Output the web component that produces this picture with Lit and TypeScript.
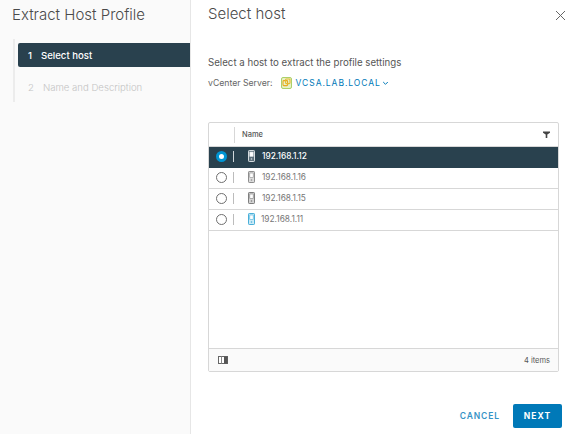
import { LitElement, html, css } from "lit";
import { customElement } from "lit/decorators.js";

const hostIcon = (color: string, fill: string) => html`<svg class="host" width="7" height="12" viewBox="0 0 7 12">
  <rect x="0.5" y="0.5" width="6" height="11" rx="0.7" fill="${fill}" stroke="${color}" stroke-width="1"></rect>
  <rect x="1.8" y="2" width="3.4" height="4.5" fill="#fff" stroke="${color}" stroke-width="0.6"></rect>
  <circle cx="3.5" cy="9" r="0.8" fill="${color}"></circle>
</svg>`;

const hosts = [
  { ip: "192.168.1.12", sel: true, c: "#d5dbde", f: "#5c6f7a" },
  { ip: "192.168.1.16", sel: false, c: "#8c8c8c", f: "#dcdcdc" },
  { ip: "192.168.1.15", sel: false, c: "#7e7e7e", f: "#d4d4d4" },
  { ip: "192.168.1.11", sel: false, c: "#49afd9", f: "#cbeaf7", shift: true },
];

@customElement("app-root")
export class AppRoot extends LitElement {
  static styles = css`
    :host { display: block; width: 567px; height: 434px; font-family: "Inter", "Open Sans", sans-serif; color: #565656; overflow: hidden; background: #fff; }
    .wrap { display: flex; height: 434px; }
    .side { width: 190px; flex: none; background: #fafafa; border-right: 1px solid #e6e6e6; padding-top: 4px; }
    .side h1 { margin: 0 0 0 12px; font-size: 15px; line-height: 22px; font-weight: 300; color: #4a4a4a; white-space: nowrap; }
    .steps { margin: 13px 0 0 13px; border-left: 2px solid #ececec; height: 63px; padding: 4px 0 0 3px; box-sizing: border-box; }
    .step { display: flex; align-items: center; height: 24px; font-size: 9.6px; padding-left: 10px; gap: 9px; border-radius: 2px 0 0 2px; white-space: nowrap; }
    .step.on { background: #29414e; color: #fff; font-weight: 500; }
    .step.off { color: #c4c4c4; margin-top: 8px; font-weight: 300; }
    .main { flex: 1; display: flex; flex-direction: column; padding: 0 1px 0 17px; min-width: 0; }
    .top { display: flex; justify-content: space-between; align-items: flex-start; padding-top: 3px; }
    .top h2 { margin: 0; font-size: 15px; line-height: 22px; font-weight: 300; color: #4a4a4a; }
    .close { margin-top: 7px; display: block; }
    .intro { margin: 31px 0 0 0; font-size: 9.7px; line-height: 14px; color: #565656; white-space: nowrap; }
    .vc { display: flex; align-items: center; margin-top: 6px; height: 14px; font-size: 8.7px; color: #666; white-space: nowrap; }
    .vc svg.cube { margin-left: 8px; }
    .vc a { color: #0079b8; margin-left: 4px; letter-spacing: 0.95px; font-size: 8.5px; font-weight: 400; }
    .vc svg.caret { margin-left: 1px; }
    .grid { margin-top: 32px; width: 351px; height: 250px; box-sizing: border-box; border: 1px solid #d7d7d7; border-radius: 2px; display: flex; flex-direction: column; }
    .head { height: 23px; display: flex; align-items: center; border-bottom: 1px solid #d7d7d7; font-size: 7.5px; color: #565656; flex: none; font-weight: 500; }
    .head .c0 { width: 25px; height: 16px; border-right: 1px solid #d7d7d7; flex: none; }
    .head .name { margin-left: 7px; flex: 1; }
    .head svg { margin-right: 8px; }
    .row { height: 21px; display: flex; align-items: center; border-bottom: 1px solid #d7d7d7; font-size: 8.3px; color: #767676; flex: none; box-sizing: border-box; padding-bottom: 2px; }
    .row.sel { background: #29414e; color: #fff; font-weight: 500; border-bottom-color: #29414e; }
    .radio { width: 11px; height: 11px; border-radius: 50%; border: 1px solid #6f6f6f; margin-left: 7px; flex: none; box-sizing: border-box; background: #fff; }
    .row.sel .radio { border: 3.5px solid #0095d3; background: #fff; }
    .sep { width: 1px; height: 11px; background: #bcbcbc; margin-left: 6px; flex: none; }
    .row.sel .sep { background: #cfd6da; }
    .host { margin-left: 14px; flex: none; }
    .ip { margin-left: 7px; }
    .row.shift .ip { margin-left: 6px; }
    .spacer { flex: 1; }
    .foot { height: 23px; flex: none; background: #fafafa; border-top: 1px solid #d7d7d7; display: flex; align-items: center; justify-content: space-between; font-size: 7.5px; color: #565656; padding: 0 8px 0 9px; box-sizing: border-box; }
    .btns { display: flex; justify-content: flex-end; align-items: center; margin-top: 32px; padding-right: 4px; }
    .cancel { font-size: 8.5px; font-weight: 600; letter-spacing: 0.9px; color: #0079b8; margin-right: 13px; opacity: 0.8; }
    .next { width: 49px; height: 24px; background: #0079b8; color: #fff; font-size: 8.5px; font-weight: 700; letter-spacing: 1px; border-radius: 2px; display: flex; align-items: center; justify-content: center; }
  `;

  render() {
    return html`<div class="wrap">
      <aside class="side">
        <h1>Extract Host Profile</h1>
        <div class="steps">
          <div class="step on"><span>1</span><span>Select host</span></div>
          <div class="step off"><span>2</span><span>Name and Description</span></div>
        </div>
      </aside>
      <main class="main">
        <div class="top">
          <h2>Select host</h2>
          <svg class="close" width="11" height="11" viewBox="0 0 11 11"><path d="M1 1 L10 10 M10 1 L1 10" stroke="#666" stroke-width="1" fill="none"></path></svg>
        </div>
        <p class="intro">Select a host to extract the profile settings</p>
        <div class="vc">
          <span>vCenter Server:</span>
          <svg class="cube" width="11" height="12" viewBox="0 0 11 12">
            <rect x="0.5" y="0.5" width="10" height="11" rx="1.5" fill="#e6f2c8" stroke="#9cc54a" stroke-width="0.8"></rect>
            <rect x="2" y="3.6" width="4.6" height="5" rx="0.8" fill="none" stroke="#e8a91e" stroke-width="1.1"></rect>
            <rect x="4.6" y="2" width="4.4" height="4.6" rx="0.8" fill="none" stroke="#e8b92e" stroke-width="1.1"></rect>
          </svg>
          <a>VCSA.LAB.LOCAL</a>
          <svg class="caret" width="7" height="5" viewBox="0 0 7 5"><path d="M1.2 1 L3.5 3.3 L5.8 1" stroke="#0079b8" stroke-width="1" fill="none"></path></svg>
        </div>
        <div class="grid">
          <div class="head">
            <div class="c0"></div>
            <div class="name">Name</div>
            <svg width="7" height="7" viewBox="0 0 7 7"><path d="M0 0.5 H7 V1.8 L4.3 3.6 V7 H2.7 V3.6 L0 1.8 Z" fill="#444"></path></svg>
          </div>
          ${hosts.map(h => html`<div class="row ${h.sel ? "sel" : ""} ${h.shift ? "shift" : ""}">
            <span class="radio"></span><span class="sep"></span>
            ${hostIcon(h.c, h.f)}
            <span class="ip">${h.ip}</span>
          </div>`)}
          <div class="spacer"></div>
          <div class="foot">
            <svg width="10" height="8" viewBox="0 0 10 8"><rect x="0.5" y="0.5" width="9" height="7" fill="#fff" stroke="#666"></rect><rect x="3" y="0.5" width="1" height="7" fill="#888"></rect><rect x="6" y="0.5" width="3.5" height="7" fill="#555"></rect></svg>
            <span>4 items</span>
          </div>
        </div>
        <div class="btns">
          <span class="cancel">CANCEL</span>
          <span class="next">NEXT</span>
        </div>
      </main>
    </div>`;
  }
}
